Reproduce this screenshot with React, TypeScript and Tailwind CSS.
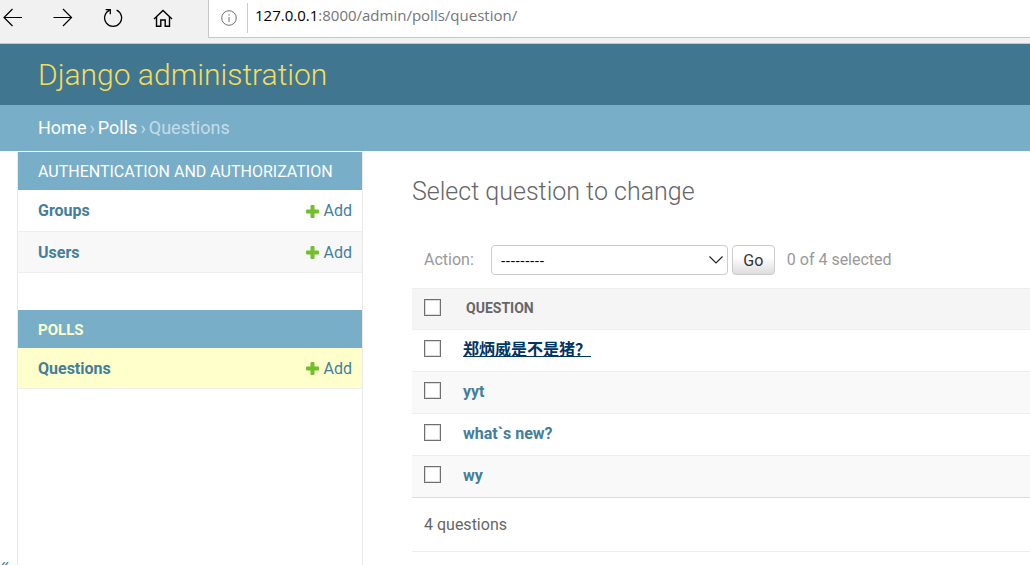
import { useState } from 'react';
import clsx from 'clsx';

const sections = [
  {
    name: 'Authentication and Authorization',
    current: false,
    models: ['Groups', 'Users'],
  },
  { name: 'Polls', current: true, models: ['Questions'] },
];

const questions = ['郑炳威是不是猪？', 'yyt', 'what`s new?', 'wy'];

const checkboxClass =
  'block size-[17px] appearance-none border border-[#707070] bg-white outline outline-1 -outline-offset-2 outline-[#dcdcdc] checked:bg-[#447e9b]';

function BrowserBar() {
  return (
    <div className="flex h-11 items-start border-b border-[#c8c8c8] bg-[#f1f1f1]">
      <div className="flex w-52 shrink-0 gap-[30px] overflow-hidden pl-[3px] pt-2 text-black">
        <button type="button" aria-label="Back" className="size-5 shrink-0">
          <svg viewBox="0 0 20 20" className="size-5" fill="none" stroke="currentColor" strokeWidth="1.2">
            <path d="M19 9.5H1M9.5 1L1 9.5L9.5 18" />
          </svg>
        </button>
        <button type="button" aria-label="Forward" className="size-5 shrink-0">
          <svg viewBox="0 0 20 20" className="size-5" fill="none" stroke="currentColor" strokeWidth="1.2">
            <path d="M0.5 9.5H18.5M10 1L18.5 9.5L10 18" />
          </svg>
        </button>
        <button type="button" aria-label="Refresh" className="size-5 shrink-0">
          <svg viewBox="0 0 20 20" className="size-5" fill="none" stroke="currentColor" strokeWidth="1.3">
            <path d="M13.6 2.2A8.5 8.5 0 1 1 6.6 2.2" />
            <path d="M2.6 1.6H7.3V6.3" />
          </svg>
        </button>
        <button type="button" aria-label="Home" className="size-5 shrink-0">
          <svg viewBox="0 0 20 20" className="size-5" fill="none" stroke="currentColor" strokeWidth="1.4">
            <path d="M1 11L10 2.5L19 11" />
            <path d="M3.5 9V18.2H7.8V12H12.2V18.2H16.5V9" />
          </svg>
        </button>
      </div>
      <div className="flex h-[38px] flex-1 items-start border-b border-l border-[#c8c8c8] bg-white pl-3">
        <svg viewBox="0 0 16 16" className="mt-[10px] size-4 shrink-0" fill="none" stroke="#707070">
          <circle cx="8" cy="8" r="7.3" />
          <path d="M8 7V12M8 4.2V5.6" />
        </svg>
        <div className="ml-[10px] mt-[3px] h-[30px] w-px bg-[#cccccc]" />
        <div className="ml-[7px] mt-[3px] font-['Open_Sans',sans-serif] text-[15px] leading-6 text-[#767676]">
          <span className="text-black">127.0.0.1</span>:8000/admin/polls/question/
        </div>
      </div>
    </div>
  );
}

function AddLink() {
  return (
    <a href="#" className="flex items-center justify-end gap-[5px] text-[#447e9b]">
      <svg viewBox="0 0 13 13" className="size-[13px]" fill="#70bf2b">
        <path d="M4.5 1Q4.5 0 5.5 0H7.5Q8.5 0 8.5 1V4.5H12Q13 4.5 13 5.5V7.5Q13 8.5 12 8.5H8.5V12Q8.5 13 7.5 13H5.5Q4.5 13 4.5 12V8.5H1Q0 8.5 0 7.5V5.5Q0 4.5 1 4.5H4.5Z" />
      </svg>
      Add
    </a>
  );
}

function Sidebar() {
  return (
    <nav className="w-[345px] shrink-0 border-r border-[#eaeaea] pt-px">
      {sections.map(section => (
        <table key={section.name} className="mb-[37px] w-full">
          <caption
            className={clsx(
              'bg-[#79aec8] pl-5 pt-0.5 text-left uppercase leading-9',
              section.current ? 'text-[15px] font-bold text-[#ffffcc]' : 'text-base text-white'
            )}
          >
            <a href="#">{section.name}</a>
          </caption>
          <tbody>
            {section.models.map((model, i) => (
              <tr
                key={model}
                className={clsx(
                  'h-[41px] border-b border-[#eeeeee]',
                  section.current ? 'bg-[#ffffcc]' : i % 2 === 1 && 'bg-[#f8f8f8]'
                )}
              >
                <th scope="row" className="pl-5 pt-0.5 text-left font-bold text-[#447e9b]">
                  <a href="#">{model}</a>
                </th>
                <td className="pr-[10px] pt-0.5">
                  <AddLink />
                </td>
              </tr>
            ))}
          </tbody>
        </table>
      ))}
    </nav>
  );
}

export default function App() {
  const [selected, setSelected] = useState<string[]>([]);

  const toggle = (question: string) => {
    setSelected(prev =>
      prev.includes(question) ? prev.filter(q => q !== question) : [...prev, question]
    );
  };

  const toggleAll = () => {
    setSelected(selected.length === questions.length ? [] : questions);
  };

  return (
    <div className="flex h-screen flex-col overflow-hidden bg-white font-[Roboto,'Noto_Sans_CJK_SC',sans-serif] text-base text-[#666666]">
      <BrowserBar />

      <header className="shrink-0 bg-[#417690] px-[38px] py-3">
        <h1 className="text-[30px] font-light leading-[37px] text-[#f5dd5d]">
          <a href="#">Django administration</a>
        </h1>
      </header>

      <div className="flex h-[46px] shrink-0 items-center gap-[3px] bg-[#79aec8] px-[38px] text-lg text-[#c4dce8]">
        <a href="#" className="text-white">Home</a>
        <span>›</span>
        <a href="#" className="text-white">Polls</a>
        <span>›</span>
        <span>Questions</span>
      </div>

      <div className="flex flex-1 items-start overflow-hidden">
        <button
          type="button"
          aria-label="Toggle navigation"
          className="h-[828px] w-[18px] shrink-0 border-r border-[#eaeaea] text-left text-xl text-[#447e9b]"
        >
          «
        </button>
        <div className="flex h-full">
          <Sidebar />
        </div>

        <main className="ml-[49px] flex-1">
          <h2 className="mt-[25px] text-[25px] font-light leading-8">Select question to change</h2>

          <div className="mt-[37px] flex h-[30px] items-center pl-3 text-[#999999]">
            <label htmlFor="action">Action:</label>
            <div className="relative ml-[17px]">
              <select
                id="action"
                className="block h-[30px] w-[237px] appearance-none rounded border border-[#cccccc] bg-white pl-[9px] font-['Open_Sans',sans-serif] text-[15px] text-black"
              >
                <option>---------</option>
                <option>Delete selected questions</option>
              </select>
              <svg
                viewBox="0 0 14 8"
                className="pointer-events-none absolute right-[5px] top-[11px] h-2 w-3.5"
                fill="none"
                stroke="#222222"
                strokeWidth="1.2"
              >
                <path d="M0.5 0.5L7 7L13.5 0.5" />
              </svg>
            </div>
            <button
              type="button"
              className="ml-1 h-[30px] w-[43px] rounded border border-[#cccccc] bg-linear-to-b from-white from-40% to-[#dddddd] pt-0.5 text-[#333333]"
            >
              Go
            </button>
            <span className="ml-3">
              {selected.length} of {questions.length} selected
            </span>
          </div>

          <table className="mt-[13px] w-full">
            <thead>
              <tr className="h-[41px] border-y border-[#eeeeee] bg-[#f5f5f5]">
                <th className="w-[51px] pb-1 pl-3">
                  <input
                    type="checkbox"
                    aria-label="Select all"
                    className={checkboxClass}
                    checked={selected.length === questions.length}
                    onChange={toggleAll}
                  />
                </th>
                <th className="pb-0.5 pl-[3px] text-left text-sm font-bold uppercase">Question</th>
              </tr>
            </thead>
            <tbody>
              {questions.map((question, i) => (
                <tr
                  key={question}
                  className={clsx('h-[42px] border-b border-[#eeeeee] last:border-[#dddddd]', i % 2 === 1 && 'bg-[#f9f9f9]')}
                >
                  <td className="pb-1 pl-3">
                    <input
                      type="checkbox"
                      aria-label={question}
                      className={checkboxClass}
                      checked={selected.includes(question)}
                      onChange={() => toggle(question)}
                    />
                  </td>
                  <th scope="row" className="pb-0.5 text-left font-bold">
                    <a href="#" className={i === 0 ? 'text-[#003366] underline' : 'text-[#447e9b]'}>
                      {question}
                    </a>
                  </th>
                </tr>
              ))}
            </tbody>
          </table>

          <p className="border-b border-[#eeeeee] pb-[14px] pl-3 pt-[15px] leading-6">
            {questions.length} questions
          </p>
        </main>
      </div>
    </div>
  );
}
